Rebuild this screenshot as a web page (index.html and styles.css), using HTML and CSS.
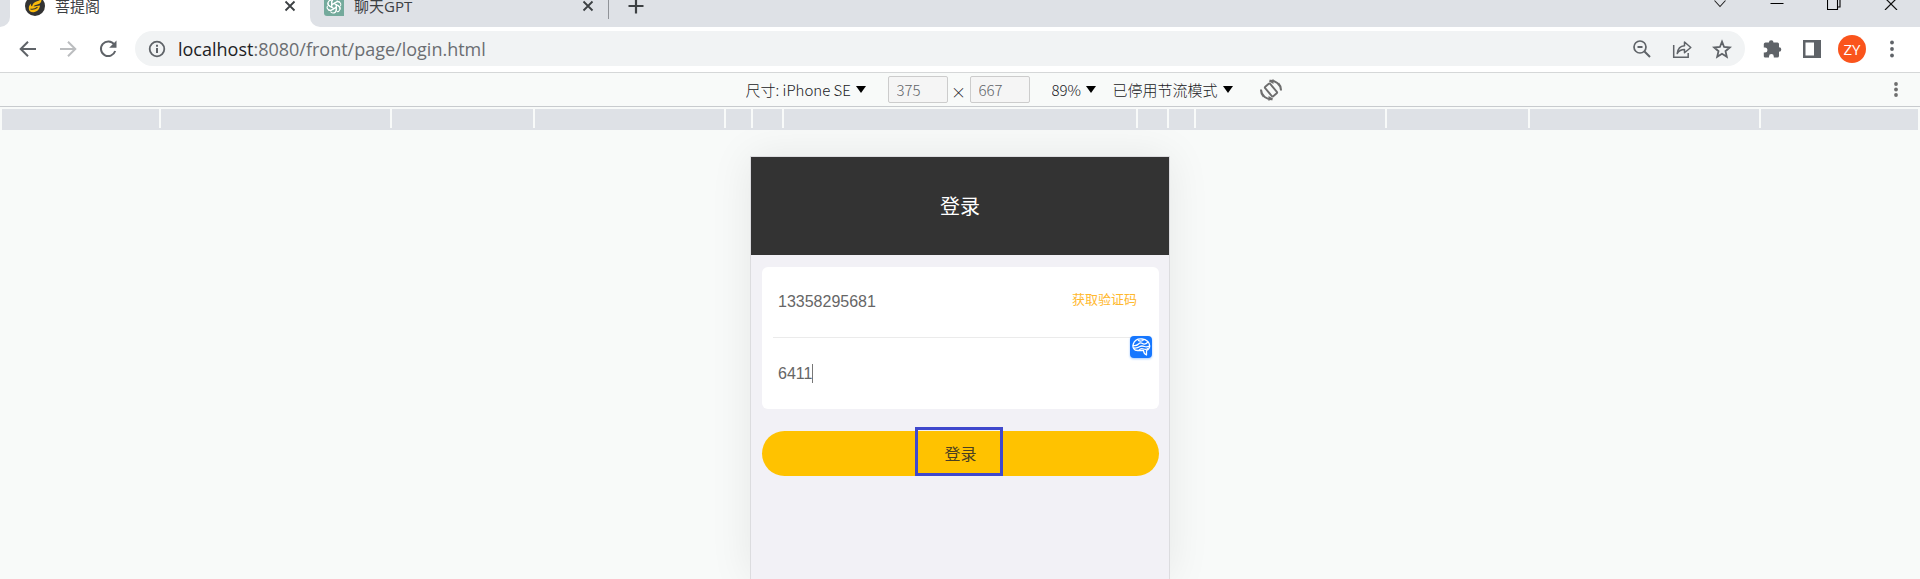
FILE: index.html
```html
<!DOCTYPE html>
<html lang="zh-CN">
<head>
<meta charset="utf-8">
<title>菩提阁</title>
<link rel="stylesheet" href="styles.css">
</head>
<body>
<div class="browser">
  <header class="tab-strip">
    <div class="tab-edge"></div>
    <div class="tab tab-active">
      <svg class="favicon" viewBox="0 0 20 20"><circle cx="10" cy="10" r="10" fill="#333"/><path d="M7 10.500c.5-3 2.500-4.500 5-5.200 1.800-.6 3.200-1.300 4.500-2.300.2 2.700-1 4.500-3.500 5.300-1.700.6-3.500.7-4.500 2.200l6.500-.9c-.3 3.700-3 6.400-6.500 6.700-3 .2-4.800-1.500-4.700-4.300.1-2 1-3.500 2.400-4.500-.6 1.300-.6 2 .8 3z" fill="#f9b90b"/><path d="M5.500 13c2.700.8 5-.2 7-1.700" fill="none" stroke="#333" stroke-width="1.100"/></svg>
      <span class="tab-title">菩提阁</span>
      <button class="icon-button tab-close" aria-label="关闭标签页"><svg width="12" height="12" viewBox="0 0 12 12"><path d="M1.500 1.500l9 9M10.500 1.500l-9 9" stroke="#3c4043" stroke-width="1.800"/></svg></button>
    </div>
    <div class="tab-rest">
      <div class="tab tab-second">
        <svg class="favicon" viewBox="0 0 20 20"><path d="M3 0h17v20H3a3 3 0 0 1-3-3V3a3 3 0 0 1 3-3z" fill="#74aa9c"/><g fill="none" stroke="#fff" stroke-width="1.100"><path id="petal" d="M7.700 11.300V6.200c0-3.300 4.300-4.300 5.800-1.700M7.700 8.700l4.600-2.700c1.200-.7 2.600-.5 3.600.4"/><use href="#petal" transform="rotate(60 10 10)"/><use href="#petal" transform="rotate(120 10 10)"/><use href="#petal" transform="rotate(180 10 10)"/><use href="#petal" transform="rotate(240 10 10)"/><use href="#petal" transform="rotate(300 10 10)"/></g></svg>
        <span class="tab-title">聊天GPT</span>
        <button class="icon-button tab-close" aria-label="关闭标签页"><svg width="12" height="12" viewBox="0 0 12 12"><path d="M1.500 1.500l9 9M10.500 1.500l-9 9" stroke="#3c4043" stroke-width="1.800"/></svg></button>
      </div>
      <span class="tab-divider"></span>
      <button class="icon-button new-tab" aria-label="新标签页"><svg width="16" height="16" viewBox="0 0 16 16"><path d="M8 .5v15M.5 8h15" stroke="#3c4043" stroke-width="2.200"/></svg></button>
      <div class="window-controls">
        <button class="icon-button" aria-label="搜索标签页"><svg width="14" height="14" viewBox="0 0 14 14"><path d="M1.500 4.500L7 10.500l5.500-6" fill="none" stroke="#222" stroke-width="1.100"/></svg></button>
        <button class="icon-button" aria-label="最小化"><svg width="14" height="14" viewBox="0 0 14 14"><path d="M.5 7.500h13" stroke="#000"/></svg></button>
        <button class="icon-button" aria-label="还原"><svg width="14" height="14" viewBox="0 0 14 14"><path d="M.5 3.500h10v10H.5zM3 3.500V1h10v10h-2.500" fill="none" stroke="#000" stroke-width="1.100"/></svg></button>
        <button class="icon-button" aria-label="关闭"><svg width="14" height="14" viewBox="0 0 14 14"><path d="M1 2l12 12M13 2L1 14" stroke="#111" stroke-width="1.200"/></svg></button>
      </div>
    </div>
  </header>

  <nav class="toolbar">
    <button class="icon-button" aria-label="后退"><svg width="20" height="20" viewBox="0 0 20 20"><path d="M18 10H3M10 2.700L2.700 10l7.300 7.300" fill="none" stroke="#5f6368" stroke-width="2"/></svg></button>
    <button class="icon-button" aria-label="前进"><svg width="20" height="20" viewBox="0 0 20 20"><path d="M2 10h15M10 2.700l7.300 7.300-7.300 7.300" fill="none" stroke="#bbbdbf" stroke-width="2"/></svg></button>
    <button class="icon-button" aria-label="重新加载"><svg width="20" height="20" viewBox="0 0 20 20"><path d="M16.200 5.500A7.300 7.300 0 1 0 17.200 12" fill="none" stroke="#5f6368" stroke-width="2"/><path d="M18.500 1.500v7.300h-7.300z" fill="#5f6368"/></svg></button>
    <div class="address">
      <svg width="18" height="18" viewBox="0 0 18 18"><circle cx="9" cy="9" r="7.300" fill="none" stroke="#5f6368" stroke-width="1.800"/><path d="M9 8v5M9 4.800v2" stroke="#5f6368" stroke-width="2"/></svg>
      <a class="url" href="#"><span class="url-host">localhost</span>:8080/front/page/login.html</a>
      <div class="address-actions">
        <button class="icon-button" aria-label="缩放"><svg width="20" height="20" viewBox="0 0 20 20"><circle cx="8" cy="8" r="6" fill="none" stroke="#5f6368" stroke-width="1.700"/><path d="M12.500 12.500L18 18M5.500 8h5" stroke="#5f6368" stroke-width="2"/></svg></button>
        <button class="icon-button" aria-label="分享"><svg width="20" height="20" viewBox="0 0 20 20"><path d="M1.700 6v12.300h14.500V14" fill="none" stroke="#5f6368" stroke-width="1.500"/><path d="M5.200 14.500c.6-5 3-7.500 7.300-7.800V3l6.300 5.500-6.300 5.300v-3.300c-3.500 0-5.500 1-7.300 4z" fill="none" stroke="#5f6368" stroke-width="1.500" stroke-linejoin="round"/></svg></button>
        <button class="icon-button" aria-label="收藏"><svg width="20" height="20" viewBox="0 0 20 20"><path d="M10 2.700l2.100 5.300 5.700.5-4.300 3.700 1.300 5.600-4.800-3-4.800 3 1.300-5.600-4.300-3.700 5.700-.5z" fill="none" stroke="#5f6368" stroke-width="1.800"/></svg></button>
      </div>
    </div>
    <button class="icon-button" aria-label="扩展程序"><svg width="20" height="20" viewBox="0 0 20 20"><path d="M15.500 3.500h-4a2.300 2.300 0 0 0-4.600 0H3.500A1.700 1.700 0 0 0 1.800 5v3.500h1.100a2.500 2.500 0 0 1 0 5H1.800V17a1.500 1.500 0 0 0 1.600 1.600H7v-1.200a2.400 2.400 0 0 1 4.800 0v1.200h3.500A1.700 1.700 0 0 0 17 17v-4.200a2.300 2.300 0 0 0 0-4.600V5a1.500 1.500 0 0 0-1.500-1.500z" fill="#5f6368"/></svg></button>
    <button class="icon-button" aria-label="侧边栏"><svg width="20" height="20" viewBox="0 0 20 20"><path d="M1 1h18v18H1zm2.500 2.500v13H12v-13z" fill="#5f6368" fill-rule="evenodd"/></svg></button>
    <button class="avatar" aria-label="个人资料">ZY</button>
    <button class="icon-button" aria-label="菜单"><svg width="20" height="20" viewBox="0 0 20 20" fill="#5f6368"><circle cx="10" cy="3.500" r="1.900"/><circle cx="10" cy="10" r="1.900"/><circle cx="10" cy="16.500" r="1.900"/></svg></button>
  </nav>

  <section class="device-bar">
    <div class="device-tools">
      <label class="picker"><select aria-label="尺寸"><option>尺寸: iPhone SE</option></select><svg class="caret" viewBox="0 0 10 7"><path d="M0 0h10L5 7z"/></svg></label>
      <div class="dimensions">
        <input class="size" aria-label="宽度" value="375">
        <span class="times">×</span>
        <input class="size" aria-label="高度" value="667">
      </div>
      <label class="picker zoom"><select aria-label="缩放比例"><option>89%</option></select><svg class="caret" viewBox="0 0 10 7"><path d="M0 0h10L5 7z"/></svg></label>
      <label class="picker throttle"><select aria-label="节流"><option>已停用节流模式</option></select><svg class="caret" viewBox="0 0 10 7"><path d="M0 0h10L5 7z"/></svg></label>
      <button class="icon-button" aria-label="旋转"><svg width="24" height="24" viewBox="0 0 24 24" fill="none" stroke="#6e6e6e" stroke-width="1.900"><rect x="8.700" y="5.800" width="6.600" height="12.400" rx="1" transform="rotate(-40 12 12)"/><path d="M10.500 2.800c6-.5 11 3.200 11.500 9.700M19.500 5.500c2 2 2.700 4.200 2.500 7M13.500 21.200c-6 .5-11-3.200-11.500-9.700M4.500 18.500c-2-2-2.700-4.200-2.500-7"/><path d="M10 3.500L14.500 1v5zM14 20.500L9.500 23v-5z" fill="#6e6e6e" stroke="none"/></svg></button>
    </div>
    <button class="icon-button device-more" aria-label="更多选项"><svg width="20" height="20" viewBox="0 0 20 20" fill="#6e6e6e"><circle cx="10" cy="4" r="1.900"/><circle cx="10" cy="9.500" r="1.900"/><circle cx="10" cy="15" r="1.900"/></svg></button>
  </section>

  <div class="ruler"><i></i><i></i><i></i><i></i><i></i><i></i><i></i><i></i><i></i><i></i><i></i><i></i><i></i></div>

  <main class="stage">
    <div class="phone">
      <h1 class="phone-title">登录</h1>
      <form class="login">
        <div class="card">
          <div class="row"><input class="field" aria-label="手机号" value="13358295681"><button type="button" class="code-button">获取验证码</button></div>
          <div class="row row-code"><label class="code-entry"><input class="field code-field" aria-label="验证码" value="6411"><span class="cursor"></span></label></div>
          <svg class="badge" viewBox="0 0 22 22"><rect width="22" height="22" rx="4" fill="#1677ff"/><g fill="none" stroke="#fff" stroke-width="1.300" stroke-linecap="round" stroke-linejoin="round"><path d="M7.500 14.500C4 14.500 2.300 11.500 3.200 8.300 4.300 4.700 8 2.700 12 3c4.300.3 7.800 3.200 7.700 7-.1 2.300-1.500 3.800-3.200 4.500v4.500c-2-.8-2.800-2-3-4.500z"/><path d="M3.200 9.500c2 .5 4-.2 5.300-1.500s2.500-1.500 4-.5 3.500.5 5.500-1.500M4 12c3 .5 4.500-.5 6-1.500s3-.5 4.500 0 3.500.3 5-.5M9 14.300c1-1.500 3-1.800 4.500-1.300s3 .5 4-.3M8.500 4.500c1 1 2.500.8 4.500 0"/></g></svg>
        </div>
        <button type="button" class="submit"><span class="mark" aria-hidden="true"></span>登录</button>
      </form>
    </div>
  </main>
</div>
</body>
</html>
```
FILE: styles.css
```css
* { box-sizing: border-box; }
body {
  margin: 0;
  background: #f8faf9;
  color: #202124;
  font-family: "Open Sans", "Noto Sans CJK SC", sans-serif;
}
button, input, select { font: inherit; color: inherit; }
button { border: 0; padding: 0; background: none; }
svg { display: block; flex: none; }
.browser {
  display: flex;
  flex-direction: column;
  height: 100vh;
  overflow: hidden;
}
.icon-button {
  display: flex;
  align-items: center;
  justify-content: center;
  flex: none;
}

.tab-strip {
  display: flex;
  align-items: flex-end;
  flex: none;
  height: 27px;
  overflow: hidden;
  background: #fff;
}
.tab-edge {
  width: 10px;
  height: 43px;
  border-radius: 0 0 10px 0;
  background: #dee1e6;
}
.tab {
  display: flex;
  align-items: center;
  gap: 10px;
  height: 43px;
}
.tab-active { width: 300px; padding: 0 14px 0 15px; }
.tab-second { width: 298px; padding: 0 14px; }
.favicon { width: 20px; height: 20px; }
.tab-title { flex: 1; font-size: 15px; line-height: 20px; color: #3c4043; }
.tab-rest {
  display: flex;
  align-items: center;
  flex: 1;
  height: 43px;
  border-radius: 0 0 0 10px;
  background: #dee1e6;
}
.tab-divider { width: 1px; height: 26px; background: #909398; }
.new-tab { margin-left: 19px; }
.window-controls { display: flex; gap: 43px; margin-left: auto; padding: 0 22px 6px 0; }

.toolbar {
  display: flex;
  align-items: center;
  gap: 20px;
  flex: none;
  height: 46px;
  padding: 0 18px 2px;
  border-bottom: 1px solid #d5d7d8;
  background: #fff;
}
.address {
  display: flex;
  align-items: center;
  flex: 1;
  height: 35px;
  margin: 0 -3px;
  padding: 0 13px;
  border-radius: 18px;
  background: #f1f3f4;
}
.url {
  flex: 1;
  margin-left: 12px;
  font-size: 18px;
  line-height: 24px;
  color: #6b6e72;
  text-decoration: none;
}
.url-host { color: #202124; }
.address-actions { display: flex; gap: 20px; }
.avatar {
  width: 28px;
  height: 28px;
  margin: 0 -4px;
  border-radius: 50%;
  background: #fa541c;
  color: #fff;
  font-size: 15px;
  line-height: 28px;
}

.device-bar {
  display: grid;
  grid-template-columns: 1fr auto 1fr;
  align-items: center;
  flex: none;
  height: 34px;
  border-bottom: 1px solid #c8cbce;
  font-family: "Noto Sans CJK SC", sans-serif;
  font-size: 15px;
  font-weight: 300;
}
.device-tools {
  display: flex;
  align-items: center;
  grid-column: 2;
  padding-left: 108px;
}
.picker { display: flex; align-items: center; gap: 4px; }
.picker select {
  appearance: none;
  border: 0;
  padding: 0;
  background: none;
  line-height: 22px;
}
.caret { width: 10px; height: 7px; }
.dimensions { display: flex; align-items: center; margin: 0 22px; }
.size {
  width: 60px;
  height: 27px;
  padding: 0 8px;
  border: 1px solid #ccc;
  border-radius: 2px;
  background: #f5f5f5;
  color: #5f6368;
}
.times { width: 22px; padding-top: 4px; text-align: center; }
.throttle { margin: 0 26px 0 17px; }
.device-more { justify-self: end; margin-right: 14px; }

.ruler {
  display: grid;
  grid-template-columns: 157fr 229fr 141fr 189fr 25fr 29fr 352fr 29fr 25fr 189fr 141fr 229fr 157fr;
  gap: 2px;
  flex: none;
  height: 21px;
  margin: 2px 2px 0;
  border-bottom: 2px solid #dee1e6;
}
.ruler i { background: #dee1e6; }

.stage {
  display: flex;
  justify-content: center;
  flex: 1;
  padding-top: 26px;
  overflow: hidden;
}
.phone {
  width: 420px;
  border: 1px solid #dcdcdf;
  border-bottom: 0;
  background: #f2f1f6;
  box-shadow: 0 0 40px rgba(0, 0, 0, 0.08);
}
.phone-title {
  margin: 0;
  padding-top: 36px;
  height: 98px;
  background: #333;
  color: #fff;
  font-size: 20px;
  font-weight: 400;
  line-height: 28px;
  text-align: center;
}
.login { padding: 12px 10px 12px 11px; }
.card {
  position: relative;
  padding: 0 9px 0 11px;
  border-radius: 6px;
  background: #fff;
}
.row {
  display: flex;
  align-items: center;
  justify-content: space-between;
  height: 71px;
  padding: 0 13px 0 5px;
  border-bottom: 1px solid #ebebeb;
}
.row-code { border-bottom: 0; }
.field {
  width: 200px;
  border: 0;
  padding: 0;
  outline: 0;
  background: none;
  color: #666;
  font-family: "Liberation Sans", sans-serif;
  font-size: 16px;
  line-height: 20px;
}
.code-entry { display: flex; align-items: center; }
.code-field { width: 34px; }
.cursor { width: 1px; height: 19px; background: #777; }
.code-button {
  padding-bottom: 6px;
  color: #ffb82e;
  font-size: 13px;
  line-height: 20px;
}
.badge {
  position: absolute;
  top: 69px;
  right: 7px;
  width: 22px;
  height: 22px;
  filter: drop-shadow(0 1px 1px rgba(22, 119, 255, 0.4));
}
.submit {
  position: relative;
  width: 100%;
  height: 45px;
  margin-top: 22px;
  border-radius: 23px;
  background: #ffc200;
  color: #4a4022;
  font-size: 16px;
  line-height: 24px;
}
.mark {
  position: absolute;
  top: -4px;
  left: calc(50% - 46px);
  width: 88px;
  height: 49px;
  border: 3px solid #3f48cc;
}
```
